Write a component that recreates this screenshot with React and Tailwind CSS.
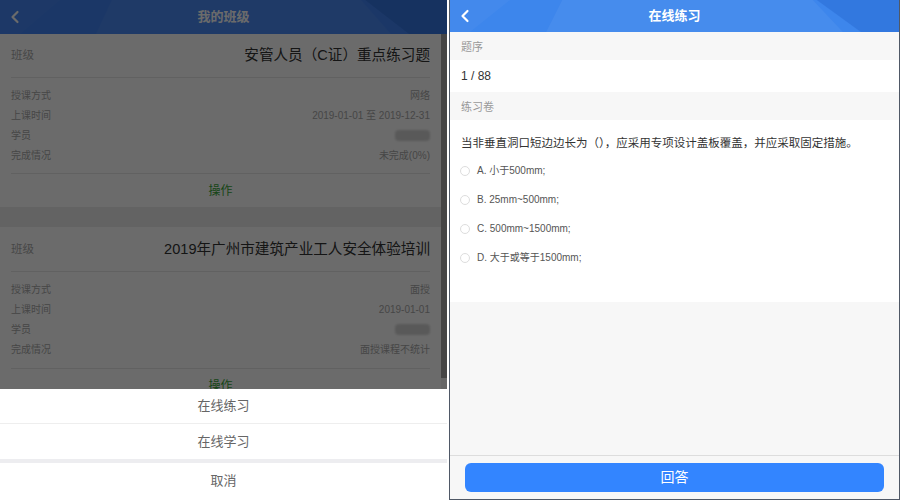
import { ChevronLeft } from "lucide-react";

const font = { fontFamily: '"Liberation Sans", "Noto Sans CJK SC", sans-serif' };

function Header({ title, bg }) {
  return (
    <div className={`relative h-full flex items-center justify-center ${bg}`}>
      <svg className="absolute inset-0 w-full h-full" viewBox="0 0 448 34" preserveAspectRatio="none">
        <polygon points="112,0 362,0 392,34 96,34" fill="#ffffff" fillOpacity="0.05" />
        <polygon points="366,0 448,0 448,34 410,34" fill="#1f5fc8" fillOpacity="0.35" />
        <polygon points="0,0 60,0 20,34 0,34" fill="#ffffff" fillOpacity="0.03" />
      </svg>
      <ChevronLeft className="absolute left-[5px] top-1/2 -translate-y-1/2 text-white" size={20} strokeWidth={2.6} />
      <span className="relative text-white font-bold text-[13px]">{title}</span>
    </div>
  );
}

function InfoRow({ label, value, blurred }) {
  return (
    <div className="flex justify-between items-center h-[20px] text-[10px] text-[#a8a8a8]">
      <span>{label}</span>
      {blurred ? (
        <span className="w-[35px] h-[11px] rounded-sm bg-[#d4d4d4] blur-[1px]" />
      ) : (
        <span>{value}</span>
      )}
    </div>
  );
}

function ClassCard({ name, mode, time, status, nameH, rowsPb }) {
  return (
    <div className="bg-white">
      <div className={`flex items-center justify-between px-[11px] pt-[1px] ${nameH}`}>
        <span className="text-[11.5px] text-[#aaa]">班级</span>
        <span className="text-[14.6px] text-[#333]">{name}</span>
      </div>
      <div className="mx-[11px] border-t border-[#e8e8e8]" />
      <div className={`px-[11px] pt-[7px] ${rowsPb}`}>
        <InfoRow label="授课方式" value={mode} />
        <InfoRow label="上课时间" value={time} />
        <InfoRow label="学员" blurred />
        <InfoRow label="完成情况" value={status} />
      </div>
      <div className="mx-[11px] border-t border-[#e8e8e8]" />
      <div className="h-[33px] flex items-center justify-center text-[12px] text-[#3aa63a]">操作</div>
    </div>
  );
}

function LeftPanel() {
  return (
    <div className="relative w-[447px] h-[500px] overflow-hidden bg-[#f2f2f2]">
      <div className="h-[34px]">
        <Header title="我的班级" bg="bg-[#4184f5]" />
      </div>
      <div className="pr-[6px]">
        <ClassCard
          name="安管人员（C证）重点练习题"
          mode="网络"
          time="2019-01-01 至 2019-12-31"
          status="未完成(0%)"
          nameH="h-[43px]"
          rowsPb="pb-[8px]"
        />
        <div className="h-[20px] bg-[#ececec]" />
        <ClassCard
          name="2019年广州市建筑产业工人安全体验培训"
          mode="面授"
          time="2019-01-01"
          status="面授课程不统计"
          nameH="h-[44px]"
          rowsPb="pb-[9px]"
        />
      </div>
      <div className="absolute inset-0 bg-black/[0.58]" />
      <div className="absolute right-0 top-[34px] w-[6px] h-[344px] bg-[#454545]" />
      <div className="absolute left-0 right-0 bottom-0 bg-white text-[13px] text-[#666]">
        <div className="h-[35px] flex items-center justify-center border-b border-[#eee]">在线练习</div>
        <div className="h-[35px] flex items-center justify-center">在线学习</div>
        <div className="h-[4px] bg-[#ededf0]" />
        <div className="h-[36px] flex items-center justify-center">取消</div>
        <div className="h-[1px]" />
      </div>
    </div>
  );
}

const options = ["A. 小于500mm;", "B. 25mm~500mm;", "C. 500mm~1500mm;", "D. 大于或等于1500mm;"];

function RightPanel() {
  return (
    <div className="w-[451px] h-[500px] border-x border-b border-[#4f5866] bg-[#f7f7f7] flex flex-col">
      <div className="h-[32px] shrink-0">
        <Header title="在线练习" bg="bg-[#3d86ec]" />
      </div>
      <div className="h-[28px] flex items-center px-[11px] pt-[2px] text-[11px] text-[#999]">题序</div>
      <div className="h-[32px] flex items-center px-[11px] bg-white text-[12px] text-[#333]">1 / 88</div>
      <div className="h-[28px] flex items-center px-[11px] pt-[2px] text-[11px] text-[#999]">练习卷</div>
      <div className="h-[182px] bg-white px-[11px] pt-[14px]">
        <p className="text-[11.5px] leading-[18px] text-[#333]">
          当非垂直洞口短边边长为（），应采用专项设计盖板覆盖，并应采取固定措施。
        </p>
        <div className="mt-[4px]">
          {options.map((o) => (
            <div key={o} className="h-[29px] flex items-center">
              <span className="w-[10px] h-[10px] rounded-full border border-[#ddd] ml-[-1px] mr-[7px]" />
              <span className="text-[10px] text-[#555]">{o}</span>
            </div>
          ))}
        </div>
      </div>
      <div className="flex-1" />
      <div className="h-[44px] border-t border-[#ddd] px-[15px] pt-[7px]">
        <button className="w-full h-[29px] rounded-md bg-[#3385ff] text-white text-[14px]">回答</button>
      </div>
    </div>
  );
}

export default function App() {
  return (
    <div className="w-[900px] h-[500px] bg-white flex" style={font}>
      <LeftPanel />
      <div className="w-[2px]" />
      <RightPanel />
    </div>
  );
}
